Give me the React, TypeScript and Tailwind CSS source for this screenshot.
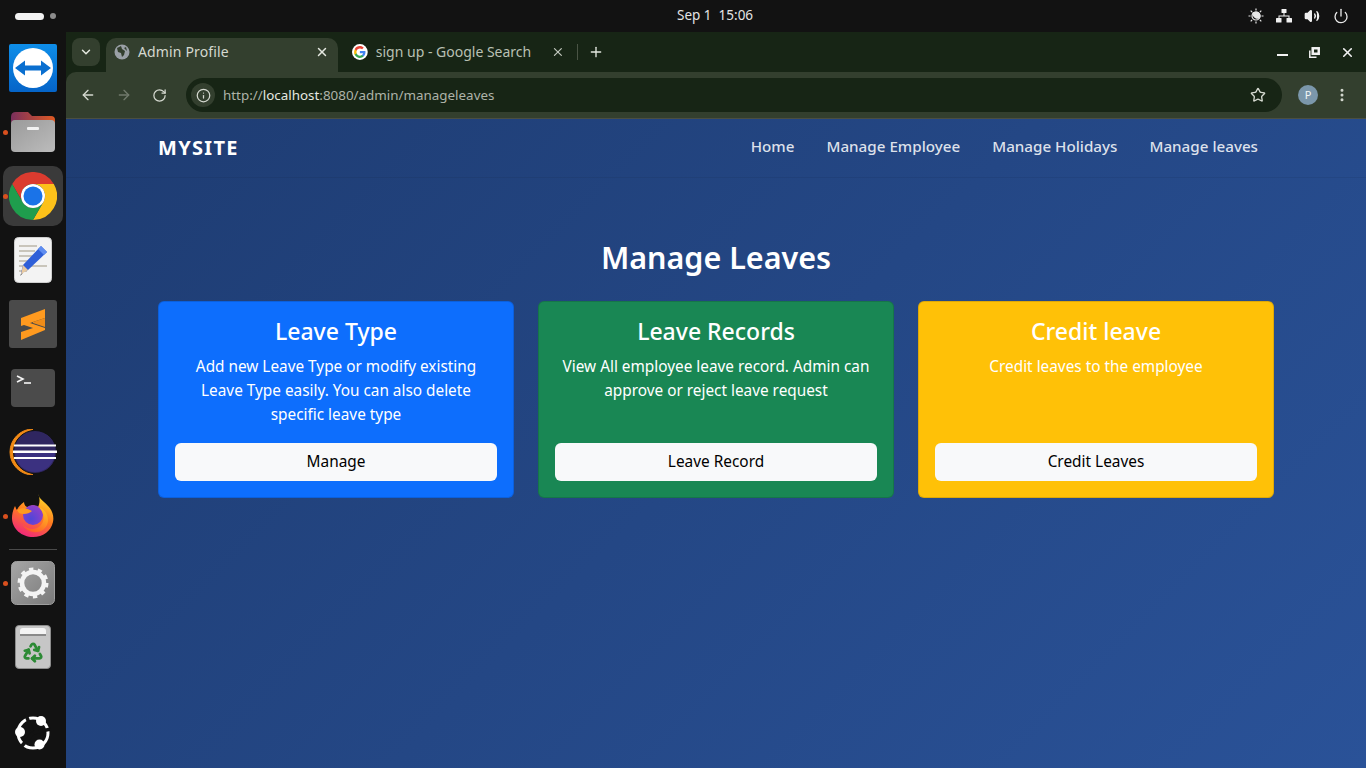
import { ArrowLeft, ArrowRight, ChevronDown, EllipsisVertical, Info, Plus, Power, Recycle, RotateCw, Star, Volume2, X } from 'lucide-react';
import type { ReactNode } from 'react';

function TeamViewerIcon() {
  return (
    <svg width="48" height="48" viewBox="0 0 48 48">
      <defs>
        <linearGradient id="tv" x1="0" y1="0" x2="0" y2="1">
          <stop offset="0" stopColor="#0e8ee9" />
          <stop offset="1" stopColor="#0564c8" />
        </linearGradient>
      </defs>
      <rect width="48" height="48" rx="2" fill="url(#tv)" />
      <circle cx="24" cy="24" r="20" fill="#fff" />
      <path d="M6 24 L16 16.5 V21.500 H32 V16.5 L42 24 L32 31.5 V26.500 H16 V31.5 Z" fill="#0a6fd0" />
    </svg>
  );
}

function FolderIcon() {
  return (
    <svg width="46" height="42" viewBox="0 0 46 42">
      <defs>
        <linearGradient id="fd" x1="0" y1="0" x2="1" y2="0">
          <stop offset="0" stopColor="#7a2f5c" />
          <stop offset="1" stopColor="#df5a24" />
        </linearGradient>
        <linearGradient id="fg" x1="0" y1="0" x2="1" y2="1">
          <stop offset="0" stopColor="#9a9a9a" />
          <stop offset="1" stopColor="#bcbcbc" />
        </linearGradient>
      </defs>
      <path d="M1 6 Q1 1 6 1 H18 L22 5 H41 Q45 5 45 9 V20 H1 Z" fill="url(#fd)" />
      <rect x="1" y="9" width="44" height="32" rx="4" fill="url(#fg)" />
      <rect x="17" y="16" width="12" height="3" rx="1" fill="#f2f2f2" />
    </svg>
  );
}

function ChromeIcon() {
  return (
    <svg width="48" height="48" viewBox="0 0 48 48">
      <path d="M3.2 12 A24 24 0 0 1 44.8 12 H24 A12 12 0 0 0 13.6 30 Z" fill="#db3b2f" />
      <path d="M44.8 12 A24 24 0 0 1 24 48 L34.4 30 A12 12 0 0 0 24 12 Z" fill="#fcc11a" />
      <path d="M24 48 A24 24 0 0 1 3.2 12 L13.6 30 A12 12 0 0 0 34.4 30 Z" fill="#1f9d4d" />
      <circle cx="24" cy="24" r="12" fill="#fff" />
      <circle cx="24" cy="24" r="9.5" fill="#1a73e8" />
    </svg>
  );
}

function EditorIcon() {
  return (
    <svg width="38" height="46" viewBox="0 0 38 46">
      <rect x="0.5" y="0.5" width="37" height="45" rx="4" fill="#f3f3f3" stroke="#cfcfcf" />
      <g fill="#c9c5bb">
        <rect x="5" y="8" width="18" height="2" />
        <rect x="5" y="13" width="16" height="2" />
        <rect x="5" y="18" width="14" height="2" />
        <rect x="5" y="23" width="12" height="2" />
        <rect x="5" y="28" width="28" height="2" />
        <rect x="5" y="33" width="8" height="2" />
      </g>
      <path d="M27 9 L33 15 L14 33 L7 36 L9 28 Z" fill="#2f5fd8" />
      <path d="M27 9 L33 15 L30 18 L24 12 Z" fill="#5f8df0" />
      <path d="M9 28 L14 33 L7 37 Z" fill="#e8c9a0" />
      <path d="M7 37 L6 39 L9 36 Z" fill="#333" />
    </svg>
  );
}

function SublimeIcon() {
  return (
    <svg width="48" height="48" viewBox="0 0 48 48">
      <rect width="48" height="48" rx="3" fill="#4a4a4a" />
      <path d="M12 18 L36 9 V18 L12 26 Z" fill="#ff9a1f" />
      <path d="M12 20 L36 28 V30 L12 40 V32 L24 28 L12 24 Z" fill="#ff9a1f" />
      <path d="M24 23 L36 27 V18 L24 22 Z" fill="#f08c18" />
    </svg>
  );
}

function TerminalIcon() {
  return (
    <svg width="44" height="38" viewBox="0 0 44 38">
      <rect width="44" height="38" rx="4" fill="#4b4b4b" />
      <path d="M6 7 L12 10 L6 13" fill="none" stroke="#f5f5f5" strokeWidth="1.6" />
      <path d="M13 14 H20" stroke="#f5f5f5" strokeWidth="1.6" />
    </svg>
  );
}

function EclipseIcon() {
  return (
    <svg width="48" height="46" viewBox="0 0 48 46">
      <path d="M24 0 A23 23 0 0 0 24 46 A26 26 0 0 1 24 0 Z" fill="#f28a16" stroke="#f28a16" />
      <circle cx="26" cy="23" r="21.5" fill="#2f2660" stroke="#111" />
      <path d="M6 23 A20 20 0 0 0 46 23 Z" fill="#3b3180" />
      <rect x="5" y="15.500" width="42" height="2" fill="#fff" />
      <rect x="4" y="21.5" width="44" height="2.500" fill="#fff" />
      <rect x="5" y="28" width="42" height="2" fill="#fff" />
    </svg>
  );
}

function FirefoxIcon() {
  return (
    <svg width="44" height="44" viewBox="0 0 44 44">
      <defs>
        <linearGradient id="ff" x1="0.75" y1="0" x2="0.3" y2="1">
          <stop offset="0" stopColor="#ffe02a" />
          <stop offset="0.5" stopColor="#ff7a1f" />
          <stop offset="1" stopColor="#f0247f" />
        </linearGradient>
        <linearGradient id="fs" x1="0.8" y1="0" x2="0.3" y2="1">
          <stop offset="0" stopColor="#ffc61f" />
          <stop offset="1" stopColor="#ff5a2a" />
        </linearGradient>
        <radialGradient id="fp" cx="0.4" cy="0.7" r="0.8">
          <stop offset="0" stopColor="#4f46d8" />
          <stop offset="1" stopColor="#9b3ec8" />
        </radialGradient>
      </defs>
      <path d="M27 0 C28 5 34 8 38 13 C42 18 43 23 42 28 C40 37 32 43 22 43 C11 43 1 35 1 24 C1 20 2 16 4 12 C5 14 5 15 6 16 C7 13 10 10 13 8 C13 11 15 13 17 13 C20 11 24 11 27 13 C29 9 29 4 27 0 Z" fill="url(#ff)" />
      <circle cx="22" cy="21" r="10" fill="url(#fp)" />
      <path d="M6 16 C11 13 16 14 21 17 C18 20 12 21 8 19 Z" fill="#ff9a1f" />
      <path d="M27 13 C33 17 35 26 29 32 C25 36 17 36 12 31 C17 40 31 41 36 31 C39 24 35 15 27 13 Z" fill="url(#fs)" />
    </svg>
  );
}

function SettingsIcon() {
  return (
    <svg width="44" height="44" viewBox="0 0 44 44">
      <defs>
        <linearGradient id="sg" x1="0" y1="0" x2="1" y2="1">
          <stop offset="0" stopColor="#a6a6a6" />
          <stop offset="1" stopColor="#7a7a7a" />
        </linearGradient>
      </defs>
      <rect x="0.5" y="0.5" width="43" height="43" rx="5" fill="url(#sg)" stroke="#9e9e9e" />
      <circle cx="22" cy="22" r="11" fill="none" stroke="#f4f4f4" strokeWidth="4.500" />
      <circle cx="22" cy="22" r="13.500" fill="none" stroke="#f4f4f4" strokeWidth="4" strokeDasharray="4.200 4.280" />
    </svg>
  );
}

function TrashIcon() {
  return (
    <div className="relative w-[36px] h-[44px] rounded-[4px] bg-[#c6c6c6] border border-[#8c8c8c] flex items-end justify-center pb-[5px]">
      <div className="absolute top-[2px] left-[4px] right-[4px] h-[8px] bg-[#f4f4f4] rounded-t-[3px] border-b-2 border-[#8a8a8a]" />
      <Recycle size={22} strokeWidth={3} className="text-[#2c8a35]" />
    </div>
  );
}

function UbuntuIcon() {
  return (
    <svg width="36" height="36" viewBox="0 0 36 36">
      <circle cx="18" cy="18" r="15" fill="none" stroke="#fff" strokeWidth="3" />
      <g stroke="#121212" strokeWidth="3.500">
        <path d="M18 18 L11 0" />
        <path d="M18 18 L36 14" />
        <path d="M18 18 L6 32" />
      </g>
      <circle cx="26" cy="6" r="5" fill="#fff" />
      <circle cx="5" cy="17" r="5" fill="#fff" />
      <circle cx="24.500" cy="29.500" r="5" fill="#fff" />
    </svg>
  );
}

function DockItem({ children, running, active }: { children: ReactNode; running?: boolean; active?: boolean }) {
  return (
    <div className="relative h-[64px] w-full flex items-center justify-center">
      {active && <div className="absolute left-[3px] top-[2px] w-[60px] h-[60px] rounded-[10px] bg-[#3a3a3a]" />}
      {running && <div className="absolute left-[3px] top-[29.5px] w-[5px] h-[5px] rounded-full bg-[#d9501e]" />}
      <div className="relative flex">{children}</div>
    </div>
  );
}

function GoogleIcon() {
  return (
    <svg width="16" height="16" viewBox="0 0 48 48">
      <circle cx="24" cy="24" r="24" fill="#fff" />
      <path d="M41 24.5c0-1.2-.1-2.300-.3-3.500H24v6.600h9.600c-.4 2.200-1.700 4-3.500 5.300v4.300h5.700c3.300-3.100 5.200-7.600 5.200-12.700z" fill="#4285f4" />
      <path d="M24 42c4.700 0 8.700-1.600 11.700-4.300L30 33.400c-1.600 1.100-3.600 1.700-6 1.700-4.600 0-8.500-3.100-9.900-7.300H8.200v4.500C11.100 38.100 17.100 42 24 42z" fill="#34a853" />
      <path d="M14.100 27.800c-.7-2.200-.7-4.500 0-6.700v-4.500H8.200c-2.400 4.900-2.400 10.800 0 15.700z" fill="#fbbc05" />
      <path d="M24 13.100c2.600 0 4.900.9 6.700 2.600l5-5C32.700 7.800 28.700 6 24 6 17.100 6 11.100 9.900 8.200 15.600l5.900 4.500c1.400-4.100 5.300-7 9.900-7z" fill="#ea4335" />
    </svg>
  );
}

function NightLightIcon() {
  return (
    <svg width="16" height="16" viewBox="0 0 16 16" fill="none" stroke="#e8e8e8" strokeWidth="1.2">
      <circle cx="8" cy="8" r="4" />
      <path d="M8 4 A4 4 0 0 1 11.500 10 A5 5 0 0 1 5 5 Z" fill="#e8e8e8" />
      <path d="M8 0.500V2.500M8 13.500V15.500M0.500 8H2.500M13.500 8H15.500M2.700 2.700L4.100 4.100M11.900 11.900L13.300 13.300M2.700 13.300L4.100 11.900M11.900 4.100L13.300 2.700" />
    </svg>
  );
}

function NetworkIcon() {
  return (
    <svg width="16" height="14" viewBox="0 0 16 14" fill="#f0f0f0">
      <rect x="5.500" y="0" width="5" height="4" rx="0.5" />
      <rect x="0" y="9" width="5.500" height="4.500" rx="0.5" />
      <rect x="10.500" y="9" width="5.500" height="4.500" rx="0.5" />
      <path d="M7.500 4H8.500V6.500H13.500V9H12.500V7.500H3.500V9H2.500V6.500H7.500Z" />
    </svg>
  );
}

function RestoreIcon() {
  return (
    <svg width="11" height="11" viewBox="0 0 11 11" fill="none" stroke="#f2f2f2" strokeWidth="1.5">
      <rect x="3.200" y="0.800" width="7" height="6.500" fill="#f2f2f2" />
      <rect x="5" y="2.500" width="3.500" height="3" fill="#172515" stroke="none" />
      <path d="M0.800 3.500V10.200H7.500" />
    </svg>
  );
}

const cards = [
  {
    title: 'Leave Type',
    text: 'Add new Leave Type or modify existing Leave Type easily. You can also delete specific leave type',
    action: 'Manage',
    color: 'bg-[#0d6efd]',
  },
  {
    title: 'Leave Records',
    text: 'View All employee leave record. Admin can approve or reject leave request',
    action: 'Leave Record',
    color: 'bg-[#198754]',
  },
  {
    title: 'Credit leave',
    text: 'Credit leaves to the employee',
    action: 'Credit Leaves',
    color: 'bg-[#ffc107]',
  },
];

const navLinks = ['Home', 'Manage Employee', 'Manage Holidays', 'Manage leaves'];

export default function App() {
  return (
    <div className="h-[768px] w-[1366px] overflow-hidden flex flex-col bg-[#121212] font-['Noto_Sans',sans-serif]">
      {/* Top bar */}
      <div className="h-[32px] shrink-0 flex items-center justify-between pl-[15px] pr-[17px] relative text-[#e4e4e4]">
        <div className="flex items-center gap-[6px]">
          <div className="w-[29px] h-[7px] rounded-full bg-[#f2f2f2]" />
          <div className="w-[6px] h-[6px] rounded-full bg-[#8c8c8c]" />
        </div>
        <div className="absolute left-[677px] top-[5px] text-[13.500px] whitespace-pre">Sep 1  15:06</div>
        <div className="flex items-center gap-[12px]">
          <div className="ml-[2px]"><NightLightIcon /></div>
          <NetworkIcon />
          <Volume2 size={16} fill="#f0f0f0" className="text-[#f0f0f0]" />
          <Power size={16} className="text-[#e8e8e8] ml-[1px]" />
        </div>
      </div>

      <div className="flex-1 flex min-h-0">
        {/* Dock */}
        <div className="w-[66px] shrink-0 flex flex-col pt-[4px] pb-[3px]">
          <DockItem><TeamViewerIcon /></DockItem>
          <DockItem running><FolderIcon /></DockItem>
          <DockItem running active><ChromeIcon /></DockItem>
          <DockItem><EditorIcon /></DockItem>
          <DockItem><SublimeIcon /></DockItem>
          <DockItem><TerminalIcon /></DockItem>
          <DockItem><EclipseIcon /></DockItem>
          <DockItem running><FirefoxIcon /></DockItem>
          <div className="h-px bg-[#4a4a4a] mx-[9px] mt-[1px] mb-[1px]" />
          <DockItem running><SettingsIcon /></DockItem>
          <DockItem><TrashIcon /></DockItem>
          <div className="mt-auto"><DockItem><UbuntuIcon /></DockItem></div>
        </div>

        {/* Browser */}
        <div className="flex-1 min-w-0 flex flex-col">
          {/* Tab strip */}
          <div className="h-[40px] shrink-0 bg-[#172515] flex items-end pl-[6px] text-[14px]">
            <div className="w-[28px] h-[28px] mb-[6px] rounded-[8px] bg-[#333f2e] flex items-center justify-center">
              <ChevronDown size={14} strokeWidth={2.5} className="text-[#e4e8e0]" />
            </div>
            <div className="ml-[6px] w-[232px] h-[34px] rounded-t-[10px] bg-[#333f2e] flex items-center pl-[8px] pr-[9px] pb-[6px] text-[#d5d9d0]">
              <svg width="16" height="16" viewBox="0 0 16 16" className="shrink-0">
                <circle cx="8" cy="8" r="7.500" fill="#9aa0a6" />
                <path d="M7 2 L3 4 L4 8 L7 9 L8 13 L10 11 L11 7 L8 5 Z M12 3 L10 4 L13 7 Z" fill="#333f2e" />
              </svg>
              <span className="ml-[8px] flex-1 pb-[2px] tracking-[0.15px]">Admin Profile</span>
              <X size={14} strokeWidth={2.5} className="text-[#e4e8e0]" />
            </div>
            <div className="w-[240px] h-[34px] flex items-center pl-[14px] pb-[6px] text-[#b9c0b3]">
              <GoogleIcon />
              <span className="ml-[8px] w-[178px] pb-[2px] whitespace-nowrap">sign up - Google Search</span>
              <X size={14} strokeWidth={2} className="text-[#c5cac0]" />
              <div className="ml-[12px] w-px h-[16px] bg-[#4a5445]" />
            </div>
            <div className="h-[34px] ml-[10px] pb-[6px] flex items-center">
              <Plus size={16} className="text-[#e4e8e0]" />
            </div>
            <div className="ml-auto h-[40px] flex items-center pr-[11px]">
              <div className="w-[11px] h-[2px] bg-[#f2f2f2] mt-[6px]" />
              <div className="ml-[21px] flex"><RestoreIcon /></div>
              <X size={15} strokeWidth={2.5} className="ml-[20px] text-[#f2f2f2]" />
            </div>
          </div>

          {/* Toolbar */}
          <div className="h-[47px] shrink-0 bg-[#172515]">
            <div className="h-full rounded-tl-[10px] bg-[#333f2e] border-b border-[#4b4f42] flex items-center pl-[14px] pr-[14px]">
              <ArrowLeft size={16} strokeWidth={2} className="text-[#d5d9d0]" />
              <ArrowRight size={16} strokeWidth={2} className="ml-[20px] text-[#717a6c]" />
              <RotateCw size={15} strokeWidth={2} className="ml-[20px] text-[#d5d9d0]" />
              <div className="ml-[19px] w-[1096px] h-[34px] rounded-full bg-[#172515] flex items-center pl-[5px] pr-[16px]">
                <div className="w-[24px] h-[24px] rounded-full bg-[#333f2e] flex items-center justify-center">
                  <Info size={15} className="text-[#d5d9d0]" />
                </div>
                <div className="ml-[8px] flex-1 text-[13.400px] text-[#aeb3a8] whitespace-nowrap">
                  http://<span className="text-[#e6e9e2]">localhost</span>:8080/admin/manageleaves
                </div>
                <Star size={16} strokeWidth={2} className="text-[#d5d9d0]" />
              </div>
              <div className="ml-[16px] w-[20px] h-[20px] rounded-full bg-[#7b97ab] text-[#f2f4f5] text-[11px] flex items-center justify-center">P</div>
              <EllipsisVertical size={16} strokeWidth={2.5} className="ml-[16px] text-[#d5d9d0]" />
            </div>
          </div>

          {/* Page */}
          <div className="flex-1 min-h-0 bg-[linear-gradient(135deg,#1e3c72,#2a5298)]">
            <div className="h-[59px] border-b border-[#0000000f] flex justify-center">
              <div className="w-[1140px] px-[12px] flex items-center justify-between">
                <div className="text-[20px] font-bold text-white tracking-[1.300px]">MYSITE</div>
                <div className="flex gap-[32px] pr-[16px] pb-[4px] text-[15.200px] text-[#ffffffd9] font-medium">
                  {navLinks.map((link) => (
                    <span key={link}>{link}</span>
                  ))}
                </div>
              </div>
            </div>

            <div className="w-[1140px] mx-auto px-[12px] pt-[56px]">
              <h2 className="text-[30.500px] leading-[46px] font-semibold text-white text-center mb-[21px]">Manage Leaves</h2>
              <div className="grid grid-cols-3 gap-[24px]">
                {cards.map((card) => (
                  <div key={card.title} className={`${card.color} rounded-[6px] border border-[#00000020] px-[16px] pt-[15px] pb-[16px] flex flex-col text-white text-center`}>
                    <div className="text-[23px] leading-[29px] font-medium mb-[8px]">{card.title}</div>
                    <p className="text-[15.350px] leading-[24px] h-[72px] mb-[17px]">{card.text}</p>
                    <button className="h-[38px] rounded-[6px] bg-[#f8f9fa] text-[15.400px] text-black">{card.action}</button>
                  </div>
                ))}
              </div>
            </div>
          </div>
        </div>
      </div>
    </div>
  );
}
